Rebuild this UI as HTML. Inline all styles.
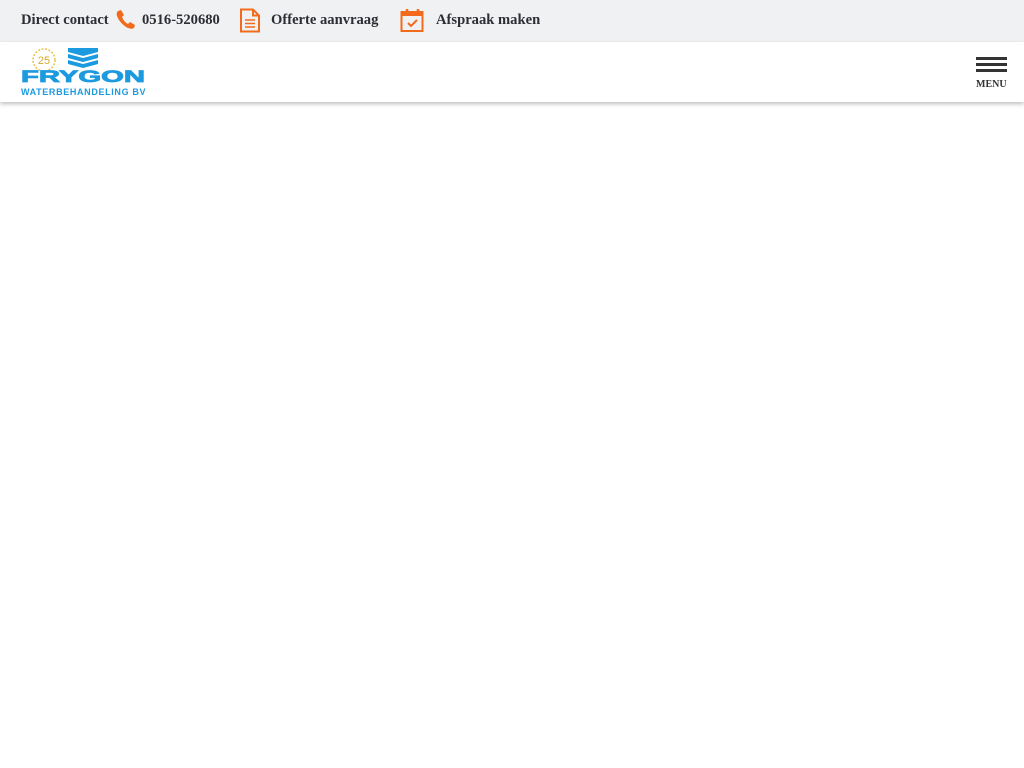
<!DOCTYPE html>
<html><head><meta charset="utf-8"><style>
*{margin:0;padding:0;box-sizing:border-box}
body{width:1024px;height:768px;background:#fff;font-family:"Liberation Serif",serif;overflow:hidden;position:relative}
.top{height:42px;background:#f0f1f3;position:relative}
.t{position:absolute;top:12px;font-weight:bold;font-size:14.6px;color:#2d2d35;white-space:nowrap}
.hdr{position:absolute;top:42px;left:0;width:1024px;height:60px;background:#fff;box-shadow:0 2px 4px rgba(0,0,0,0.25)}
svg{position:absolute}
</style></head><body>
<div class="top">
<span class="t" style="left:21px">Direct contact</span>
<svg style="left:115px;top:9px" width="20" height="21" viewBox="0 0 20 21"><path d="M3 2 L6 1 L9 6 L7 8 Q9 13 13 15 L15 13 L20 16 L19 19 Q16 21 11 18 Q4 13 2 7 Q1 4 3 2Z" fill="#f26a1b"/></svg>
<span class="t" style="left:142px">0516-520680</span>
<svg style="left:239px;top:8px" width="22" height="25" viewBox="0 0 22 25"><path d="M2 1.5 H14 L20 7.5 V23.5 H2Z M14 1.5 V7.5 H20" fill="none" stroke="#f26a1b" stroke-width="2"/><path d="M6 12H16M6 15.5H16M6 19H16" stroke="#f26a1b" stroke-width="1.6"/></svg>
<span class="t" style="left:271px">Offerte aanvraag</span>
<svg style="left:400px;top:7px" width="25" height="26" viewBox="0 0 25 26"><rect x="1.5" y="5" width="21" height="19" fill="none" stroke="#f26a1b" stroke-width="2"/><rect x="1.5" y="5" width="21" height="4" fill="#f26a1b"/><path d="M7 2V7M18 2V7" stroke="#f26a1b" stroke-width="2.5"/><path d="M8 16L11 19L17 13" fill="none" stroke="#f26a1b" stroke-width="2"/></svg>
<span class="t" style="left:436px">Afspraak maken</span>
</div>
<div class="hdr">
<svg style="left:30px;top:5px" width="30" height="28" viewBox="0 0 30 28"><circle cx="14" cy="13" r="11" fill="none" stroke="#e8c14a" stroke-width="1.5" stroke-dasharray="2 1.5"/><text x="14" y="17" font-size="11" text-anchor="middle" fill="#d9a92b" font-family="Liberation Sans">25</text></svg>
<svg style="left:68px;top:5px" width="30" height="22" viewBox="0 0 30 22"><path d="M0 1 H30 V5 L15 9 L0 5Z M0 7 L15 11 L30 7 V11 L15 15 L0 11Z M0 13 L15 17 L30 13 V17 L15 21 L0 17Z" fill="#1c9ae0"/></svg>
<div style="position:absolute;left:21px;top:26px;font-family:'Liberation Sans',sans-serif;font-weight:bold;font-size:17px;color:#1c9ae0;-webkit-text-stroke:0.8px #1c9ae0;transform:scaleX(1.72);transform-origin:left top;line-height:17px;white-space:nowrap">FRYGON</div>
<div style="position:absolute;left:21px;top:45px;font-family:'Liberation Sans',sans-serif;font-weight:bold;font-size:9px;color:#1c9ae0;letter-spacing:0.65px;white-space:nowrap">WATERBEHANDELING BV</div>
<div style="position:absolute;left:976px;top:15px;width:31px;height:3px;background:#333"></div>
<div style="position:absolute;left:976px;top:21px;width:31px;height:3px;background:#333"></div>
<div style="position:absolute;left:976px;top:27px;width:31px;height:3px;background:#333"></div>
<div style="position:absolute;left:976px;top:37px;font-size:10px;font-weight:bold;color:#333">MENU</div>
</div>
</body></html>
